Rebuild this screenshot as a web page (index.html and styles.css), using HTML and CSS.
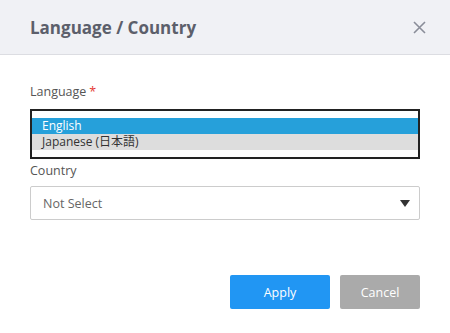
FILE: index.html
```html
<!DOCTYPE html>
<html lang="en">
<head>
    <meta charset="UTF-8">
    <title>Language / Country</title>
    <link rel="stylesheet" href="styles.css">
</head>
<body>
    <div class="dialog">
        <div class="dialog-header">
            <h2>Language / Country</h2>
            <button class="close-button" aria-label="Close">
                <svg width="13" height="13" viewBox="0 0 13 13"><path d="M1 1L12 12M12 1L1 12" stroke="#8a8d99" stroke-width="1.6" fill="none"/></svg>
            </button>
        </div>
        <div class="dialog-body">
            <label class="field-label">Language<span class="required">*</span></label>
            <div class="listbox">
                <div class="option selected">English</div>
                <div class="option hover">Japanese (日本語)</div>
            </div>
            <label class="field-label country-label">Country</label>
            <div class="select">
                <span>Not Select</span>
                <span class="arrow"></span>
            </div>
        </div>
        <div class="dialog-footer">
            <button class="btn btn-apply">Apply</button>
            <button class="btn btn-cancel">Cancel</button>
        </div>
    </div>
</body>
</html>
```

FILE: styles.css
```css
body {
    margin: 0;
    font-family: "Open Sans", "Noto Sans CJK JP", sans-serif;
    background: #fff;
    color: #555;
}
.dialog {
    width: 450px;
    height: 333px;
    background: #fff;
}
.dialog-header {
    height: 54px;
    background: #f0f1f5;
    border-bottom: 1px solid #dcdde2;
    display: flex;
    align-items: center;
    justify-content: space-between;
    padding: 0 24px 0 30px;
}
.dialog-header h2 {
    margin: 0;
    font-size: 17px;
    font-weight: 700;
    color: #5c5f6b;
}
.close-button {
    background: none;
    border: none;
    padding: 0;
    display: flex;
    cursor: pointer;
}
.dialog-body {
    padding: 28px 30px 0;
}
.field-label {
    display: block;
    font-size: 12.5px;
    line-height: 18px;
    color: #555;
}
.required {
    color: #e53935;
    margin-left: 3px;
}
.listbox {
    margin-top: 8px;
    height: 39px;
    border: 2px solid #222;
    padding-top: 7px;
    font-size: 12px;
}
.option {
    height: 16px;
    line-height: 16px;
    padding: 0 10px;
    color: #333;
}
.option.selected {
    background: #26a0da;
    color: #fff;
}
.option.hover {
    background: #dddddd;
}
.country-label {
    margin-top: 3px;
}
.select {
    margin-top: 6px;
    height: 32px;
    border: 1px solid #ccc;
    border-radius: 2px;
    display: flex;
    align-items: center;
    justify-content: space-between;
    padding: 0 9px 0 12px;
    font-size: 12.5px;
    color: #666;
}
.arrow {
    width: 0;
    height: 0;
    border-left: 5px solid transparent;
    border-right: 5px solid transparent;
    border-top: 7px solid #333;
}
.dialog-footer {
    display: flex;
    justify-content: flex-end;
    gap: 10px;
    padding: 55px 30px 0;
}
.btn {
    height: 34px;
    border: none;
    border-radius: 2px;
    color: #fff;
    font-family: "Open Sans", sans-serif;
    font-size: 12.5px;
    cursor: pointer;
}
.btn-apply {
    width: 100px;
    background: #2196f3;
}
.btn-cancel {
    width: 80px;
    background: #aaaaaa;
}
```
